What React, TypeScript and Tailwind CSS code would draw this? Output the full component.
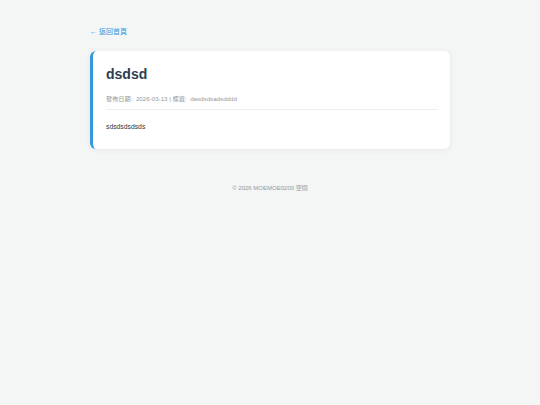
export default function App() {
  return (
    <div
      className="min-h-screen bg-[#f4f5f5] text-[#333]"
      style={{ fontFamily: '"Liberation Sans", "Noto Sans CJK TC", sans-serif' }}
    >
      <div className="mx-auto w-[360px] pt-[27px]">
        {/* Back link */}
        <a href="#" className="block text-[7px] leading-[9px] text-[#3498db]">
          ← 返回首頁
        </a>

        {/* Post card */}
        <div className="mt-[15px] rounded-[6px] border-l-[3px] border-[#3498db] bg-white pt-[15px] pb-[17px] pl-[13px] pr-[12px] shadow-[0_1px_6px_rgba(0,0,0,0.06)]">
          <h1 className="text-[14px] font-bold leading-[17px] text-[#2c3e50]">dsdsd</h1>
          <div className="mt-[11px] border-b border-[#eeeeee] pb-[6px] text-[6.2px] leading-[9px] text-[#999]">
            發佈日期:&nbsp; 2026-03-13 | 標籤:&nbsp; dasdsdsadsdddd
          </div>
          <div className="mt-[12px] text-[6.8px] leading-[10px] text-[#333]">sdsdsdsdsds</div>
        </div>

        {/* Footer */}
        <footer className="mt-[35px] text-center text-[6px] leading-[8px] text-[#909999]">
          © 2026 MOEMOE0200 空間
        </footer>
      </div>
    </div>
  );
}
